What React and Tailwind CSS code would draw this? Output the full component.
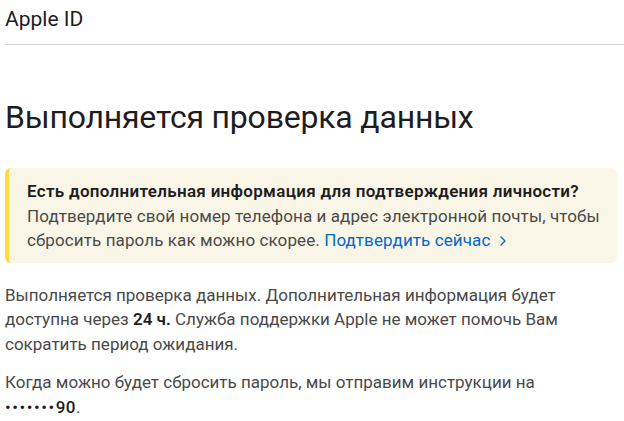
import React from 'react';

const App = () => {
  return (
    <div className="min-h-screen bg-white pl-[5px] text-[#1d1d1f]" style={{ fontFamily: 'Roboto, "Noto Sans", sans-serif' }}>
      <header className="border-b border-[#d2d2d7] pt-[6px] pb-[12px]">
        <h1 className="text-[21px] leading-[26px] font-normal">Apple ID</h1>
      </header>

      <main className="pr-[7px]">
        <h2 className="mt-[52px] text-[32px] leading-[40px] font-normal tracking-[-0.2px]">
          Выполняется проверка данных
        </h2>

        <div className="mt-[31px] rounded-[6px] border-l-[4px] border-[#fedc3b] bg-[#faf6e7] pl-[18px] pr-4 pt-[11px] pb-[10px] text-[17px] leading-[24.5px] tracking-[0.1px]">
          <p className="font-semibold text-[#1d1d1f] tracking-[0.3px]">
            Есть дополнительная информация для подтверждения личности?
          </p>
          <p className="text-[#494949]">
            Подтвердите свой номер телефона и адрес электронной почты, чтобы сбросить пароль как можно скорее.{' '}
            <a href="#" className="text-[#0066cc]">
              Подтвердить сейчас
              <svg className="ml-[10px] inline-block align-[0px]" width="6" height="10" viewBox="0 0 6 10" fill="none">
                <path d="M1 1l4 4-4 4" stroke="#0066cc" strokeWidth="1.3" strokeLinecap="round" strokeLinejoin="round" />
              </svg>
            </a>
          </p>
        </div>

        <p className="mt-[20px] mr-[16px] text-[17px] leading-[24.5px] text-[#494949]">
          Выполняется проверка данных. Дополнительная информация будет доступна через{' '}
          <span className="font-semibold text-[#1d1d1f]">24 ч.</span> Служба поддержки Apple не может помочь Вам сократить период ожидания.
        </p>

        <p className="mt-[14px] mr-[16px] text-[17px] leading-[24.5px] text-[#494949]">
          Когда можно будет сбросить пароль, мы отправим инструкции на{' '}
          <span className="whitespace-nowrap">
            <span className="text-[#1d1d1f] tracking-[1.5px]">•••••••</span>
            <span className="font-medium text-[#1d1d1f] tracking-[0.5px]">90</span>.
          </span>
        </p>
      </main>
    </div>
  );
};

export default App;
